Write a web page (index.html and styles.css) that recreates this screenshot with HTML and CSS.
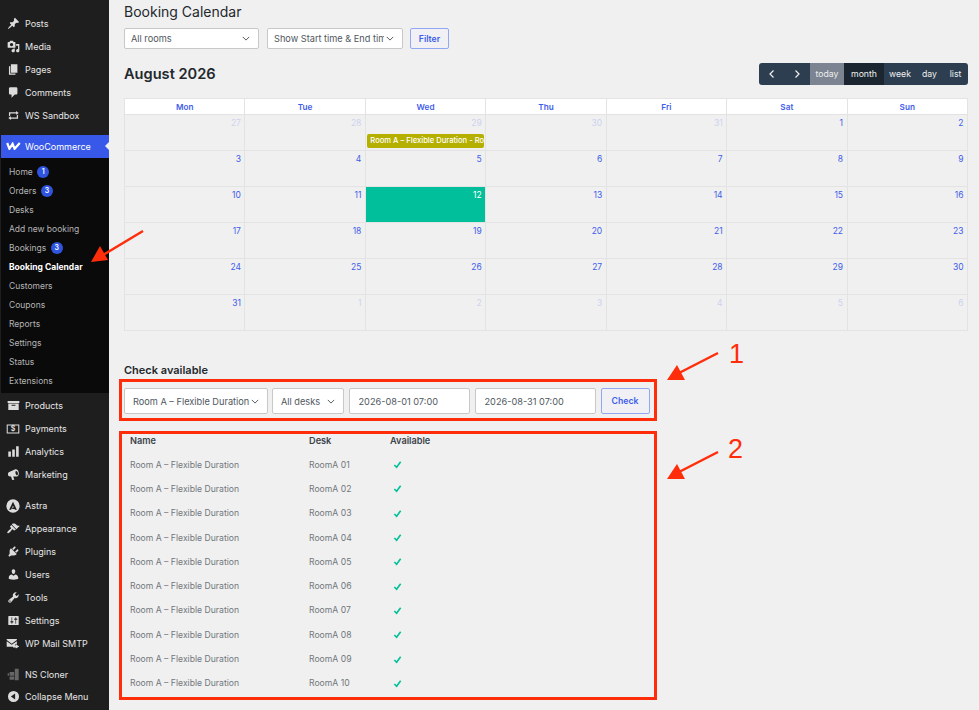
FILE: index.html
```html
<!DOCTYPE html>
<html lang="en">
<head>
    <meta charset="UTF-8">
    <meta name="viewport" content="width=device-width, initial-scale=1.0">
    <title>Booking Calendar</title>
    <link rel="stylesheet" href="styles.css">
</head>
<body>
<div class="page">
    <nav class="sidebar">
        <ul class="menu menu-top">
            <li class="menu-item"><svg class="icon" viewBox="0 0 20 20"><path d="M10.44 3.02l1.82-1.82 6.36 6.35-1.83 1.82c-1.05-.68-2.48-.57-3.41.36l-.75.75c-.92.93-1.04 2.35-.35 3.41l-1.83 1.82-2.41-2.41-2.8 2.79c-.42.42-3.38 2.71-3.8 2.29s1.86-3.39 2.28-3.81l2.79-2.79L4.1 9.36l1.83-1.82c1.05.69 2.48.57 3.4-.36l.75-.75c.93-.92 1.05-2.35.36-3.41z"/></svg>Posts</li>
            <li class="menu-item"><svg class="icon" viewBox="0 0 20 20"><path d="M13 11V4c0-.55-.45-1-1-1h-1.67L9 1H5L3.67 3H2c-.55 0-1 .45-1 1v7c0 .55.45 1 1 1h10c.55 0 1-.45 1-1zM7 4.5c1.38 0 2.5 1.12 2.5 2.5S8.38 9.5 7 9.5 4.5 8.38 4.5 7 5.62 4.5 7 4.5zM14 6h5v10.5c0 1.38-1.12 2.5-2.5 2.5S14 17.88 14 16.5s1.12-2.5 2.5-2.5c.17 0 .34.02.5.05V9h-3V6zm-4 8.05V13h2v3.5c0 1.38-1.12 2.5-2.5 2.5S7 17.88 7 16.5 8.12 14 9.5 14c.17 0 .34.02.5.05z"/></svg>Media</li>
            <li class="menu-item"><svg class="icon" viewBox="0 0 20 20"><path d="M6 15V2h10v13H6zm-1 1h8v2H3V5h2v11z"/></svg>Pages</li>
            <li class="menu-item"><svg class="icon" viewBox="0 0 20 20"><path d="M5 2h9c1.1 0 2 .9 2 2v7c0 1.1-.9 2-2 2h-2l-5 5v-5H5c-1.1 0-2-.9-2-2V4c0-1.1.9-2 2-2z"/></svg>Comments</li>
            <li class="menu-item"><svg class="icon" viewBox="0 0 20 20"><path d="M5 7v3l-2 1.500V5h11V3l4 3.010L14 9V7H5zm10 6v-3l2-1.500V15H6v2l-4-3.010L6 11v2h9z"/></svg>WS Sandbox</li>
        </ul>
        <div class="menu-current">
            <svg class="woo-icon" viewBox="0 0 15 8"><path d="M1.200 1l2.200 5.800L6.600 1.800l2 5L13.800 1"/></svg>
            WooCommerce
        </div>
        <ul class="submenu">
            <li>Home <span class="count">1</span></li>
            <li>Orders <span class="count">3</span></li>
            <li>Desks</li>
            <li>Add new booking</li>
            <li>Bookings <span class="count">3</span></li>
            <li class="current">Booking Calendar</li>
            <li>Customers</li>
            <li>Coupons</li>
            <li>Reports</li>
            <li>Settings</li>
            <li>Status</li>
            <li>Extensions</li>
        </ul>
        <ul class="menu menu-products">
            <li class="menu-item"><svg class="icon" viewBox="0 0 20 20"><path d="M19 3v3H1V3zM2 7h16v10H2zm5 2v1.500h6V9z"/></svg>Products</li>
            <li class="menu-item"><svg class="icon icon-wide" viewBox="0 0 20 20"><path fill-rule="evenodd" d="M1 3.500h18v13H1zM2.500 5v10h15V5z"/><text x="10" y="13.500" text-anchor="middle" class="icon-text">$</text></svg>Payments</li>
            <li class="menu-item"><svg class="icon" viewBox="0 0 20 20"><path d="M18 18V2h-4v16h4zm-6 0V7H8v11h4zm-6 0v-8H2v8h4z"/></svg>Analytics</li>
            <li class="menu-item"><svg class="icon" viewBox="0 0 20 20"><path d="M18 6.500c.6 3-.5 6-2.500 6.400-.2 0-.4.100-.6.100H9.500l1.800 5-3.300.5L6.200 13H4.500C3 13 1.500 11.500 1.500 9.500S2.500 6.700 3.500 6.300L12 2.200C14.500.900 17.300 3 18 6.500zM14 4.500c-1 .3-1.300 2-.8 3.800s1.700 3 2.600 2.700c1-.3 1.300-2 .8-3.800S15 4.200 14 4.500z"/></svg>Marketing</li>
        </ul>
        <ul class="menu menu-group">
            <li class="menu-item"><svg class="icon icon-wide" viewBox="0 0 20 20"><path fill-rule="evenodd" d="M10 .500a9.500 9.500 0 1 1 0 19 9.500 9.500 0 0 1 0-19zM10 4l-5.500 11.500h2.800L10 9.500l1.200 2.600H9.500l-1 2.100h3.700l.6 1.300h2.700z"/></svg>Astra</li>
            <li class="menu-item"><svg class="icon" viewBox="0 0 20 20"><path d="M14.480 11.060L7.410 3.990l1.500-1.500c.5-.56 2.300-.47 3.510.32 1.210.8 1.430 1.280 2.910 2.100 1.180.64 2.450 1.260 4.450.85zm-.71.71L6.700 4.700 4.930 6.470c-.39.39-.39 1.020 0 1.410l1.060 1.060c.39.39.39 1.030 0 1.420-.6.6-1.430 1.110-2.210 1.690-.35.26-.7.53-1.010.84C1.430 13.710 0 16.290.52 16.810l.29.29c.52.52 3.100-.91 4.440-2.250.31-.31.58-.66.84-1.010.58-.78 1.090-1.610 1.690-2.210.39-.39 1.030-.39 1.420 0l1.060 1.060c.39.39 1.020.39 1.410 0z"/></svg>Appearance</li>
            <li class="menu-item"><svg class="icon" viewBox="0 0 20 20"><path d="M13.110 4.360L9.870 7.600 8 5.730l3.240-3.240c.35-.34 1.050-.2 1.560.32.52.51.66 1.210.31 1.550zm-8 1.770l.91-1.120 9.010 9.010-1.190.84c-.71.71-2.630 1.160-3.820 1.160H6.140L4.900 17.260c-.59.59-1.540.59-2.120 0-.59-.58-.59-1.530 0-2.120l1.240-1.240v-3.880c0-1.130.4-3.190 1.090-3.890zm7.260 3.970l3.240-3.240c.34-.35 1.040-.21 1.550.31.52.51.66 1.210.31 1.550l-3.240 3.250z"/></svg>Plugins</li>
            <li class="menu-item"><svg class="icon" viewBox="0 0 20 20"><path d="M10 9.250c-2.270 0-2.730-3.440-2.730-3.440C7 4.020 7.820 2 9.970 2c2.160 0 2.980 2.020 2.710 3.810 0 0-.41 3.440-2.680 3.440zm0 2.570L12.720 10c2.390 0 4.520 2.330 4.520 4.530v2.490s-3.650 1.130-7.240 1.130c-3.650 0-7.240-1.130-7.240-1.130v-2.490c0-2.250 1.940-4.480 4.470-4.480z"/></svg>Users</li>
            <li class="menu-item"><svg class="icon" viewBox="0 0 20 20"><path d="M16.680 9.770c-1.340 1.340-3.300 1.670-4.950.99l-5.410 6.520c-.99.99-2.590.99-3.580 0s-.99-2.590 0-3.570l6.520-5.420c-.68-1.650-.35-3.610.99-4.950 1.280-1.280 3.120-1.620 4.720-1.060l-2.890 2.890 2.820 2.820 2.860-2.870c.53 1.580.18 3.390-1.080 4.650zM3.810 16.210c.4.39 1.040.39 1.430 0 .4-.4.4-1.040 0-1.430-.39-.4-1.030-.4-1.430 0-.39.39-.39 1.030 0 1.430z"/></svg>Tools</li>
            <li class="menu-item"><svg class="icon" viewBox="0 0 20 20"><path d="M18 16V4c0-.55-.45-1-1-1H3c-.55 0-1 .45-1 1v12c0 .55.45 1 1 1h14c.55 0 1-.45 1-1zM8 11h1c.55 0 1 .45 1 1s-.45 1-1 1H8v1.500c0 .28-.22.5-.5.5s-.5-.22-.5-.5V13H6c-.55 0-1-.45-1-1s.45-1 1-1h1V5.500c0-.28.22-.5.5-.5s.5.22.5.5V11zm5-2h-1c-.55 0-1-.45-1-1s.45-1 1-1h1V5.500c0-.28.22-.5.5-.5s.5.22.5.5V7h1c.55 0 1 .45 1 1s-.45 1-1 1h-1v5.500c0 .28-.22.5-.5.5s-.5-.22-.5-.5V9z"/></svg>Settings</li>
            <li class="menu-item"><svg class="icon icon-wide" viewBox="0 0 20 20"><path d="M1 3h14.500v1.200L8.200 9.500 1 4.200zM1 6l7.200 5.200L15.500 6v4.500h-2.500V14H1zM14 12v-1.500l5 3-5 3V15h-4v-3z"/></svg>WP Mail SMTP</li>
        </ul>
        <ul class="menu menu-group">
            <li class="menu-item"><svg class="icon icon-dim" viewBox="0 0 20 20"><path d="M12 1h6v18h-6zM4 6h7v6H4zM1 8h2v4H1zM4 13h7v5H4z"/></svg>NS Cloner</li>
            <li class="menu-item menu-collapse"><svg class="icon" viewBox="0 0 20 20"><path fill-rule="evenodd" d="M10 1.500a8.500 8.500 0 1 1 0 17 8.500 8.500 0 0 1 0-17zM12.500 5.500L6 10l6.500 4.500z"/></svg>Collapse Menu</li>
        </ul>
    </nav>

    <main class="content">
        <h1 class="page-title">Booking Calendar</h1>
        <div class="filters">
            <select class="field field-rooms"><option>All rooms</option></select>
            <select class="field field-time"><option>Show Start time &amp; End time</option></select>
            <button class="btn btn-filter">Filter</button>
        </div>

        <div class="cal-header">
            <h2 class="cal-title">August 2026</h2>
            <div class="toolbar">
                <span class="tool tool-nav"><svg viewBox="0 0 10 10"><path d="M6.500 1.500L3 5l3.500 3.500"/></svg></span>
                <span class="tool tool-nav"><svg viewBox="0 0 10 10"><path d="M3.500 1.500L7 5 3.500 8.500"/></svg></span>
                <span class="tool tool-today">today</span>
                <span class="tool tool-active">month</span>
                <span class="tool tool-week">week</span>
                <span class="tool tool-day">day</span>
                <span class="tool tool-list">list</span>
            </div>
        </div>

        <table class="calendar">
            <thead>
                <tr><th>Mon</th><th>Tue</th><th>Wed</th><th>Thu</th><th>Fri</th><th>Sat</th><th>Sun</th></tr>
            </thead>
            <tbody>
                <tr>
                    <td class="other">27</td><td class="other">28</td>
                    <td class="other">29<div class="event">Room A – Flexible Duration - Room A 01</div></td>
                    <td class="other">30</td><td class="other">31</td><td>1</td><td>2</td>
                </tr>
                <tr><td>3</td><td>4</td><td>5</td><td>6</td><td>7</td><td>8</td><td>9</td></tr>
                <tr><td>10</td><td>11</td><td class="today">12</td><td>13</td><td>14</td><td>15</td><td>16</td></tr>
                <tr><td>17</td><td>18</td><td>19</td><td>20</td><td>21</td><td>22</td><td>23</td></tr>
                <tr><td>24</td><td>25</td><td>26</td><td>27</td><td>28</td><td>29</td><td>30</td></tr>
                <tr>
                    <td>31</td><td class="other">1</td><td class="other">2</td><td class="other">3</td>
                    <td class="other">4</td><td class="other">5</td><td class="other">6</td>
                </tr>
            </tbody>
        </table>

        <h3 class="check-title">Check available</h3>
        <div class="red-box check-form">
            <select class="field field-room"><option>Room A – Flexible Duration</option></select>
            <select class="field field-desk"><option>All desks</option></select>
            <input class="field field-date" type="text" value="2026-08-01 07:00">
            <input class="field field-date field-date-end" type="text" value="2026-08-31 07:00">
            <button class="btn btn-check">Check</button>
        </div>

        <div class="red-box results">
            <div class="result-row result-head"><span>Name</span><span>Desk</span><span>Available</span></div>
            <div class="result-row"><span>Room A – Flexible Duration</span><span>RoomA 01</span><svg class="check" viewBox="0 0 10 10"><path d="M1.500 5.500L4 8l4.500-6"/></svg></div>
            <div class="result-row"><span>Room A – Flexible Duration</span><span>RoomA 02</span><svg class="check" viewBox="0 0 10 10"><path d="M1.500 5.500L4 8l4.500-6"/></svg></div>
            <div class="result-row"><span>Room A – Flexible Duration</span><span>RoomA 03</span><svg class="check" viewBox="0 0 10 10"><path d="M1.500 5.500L4 8l4.500-6"/></svg></div>
            <div class="result-row"><span>Room A – Flexible Duration</span><span>RoomA 04</span><svg class="check" viewBox="0 0 10 10"><path d="M1.500 5.500L4 8l4.500-6"/></svg></div>
            <div class="result-row"><span>Room A – Flexible Duration</span><span>RoomA 05</span><svg class="check" viewBox="0 0 10 10"><path d="M1.500 5.500L4 8l4.500-6"/></svg></div>
            <div class="result-row"><span>Room A – Flexible Duration</span><span>RoomA 06</span><svg class="check" viewBox="0 0 10 10"><path d="M1.500 5.500L4 8l4.500-6"/></svg></div>
            <div class="result-row"><span>Room A – Flexible Duration</span><span>RoomA 07</span><svg class="check" viewBox="0 0 10 10"><path d="M1.500 5.500L4 8l4.500-6"/></svg></div>
            <div class="result-row"><span>Room A – Flexible Duration</span><span>RoomA 08</span><svg class="check" viewBox="0 0 10 10"><path d="M1.500 5.500L4 8l4.500-6"/></svg></div>
            <div class="result-row"><span>Room A – Flexible Duration</span><span>RoomA 09</span><svg class="check" viewBox="0 0 10 10"><path d="M1.500 5.500L4 8l4.500-6"/></svg></div>
            <div class="result-row"><span>Room A – Flexible Duration</span><span>RoomA 10</span><svg class="check" viewBox="0 0 10 10"><path d="M1.500 5.500L4 8l4.500-6"/></svg></div>
        </div>
    </main>

    <!-- red annotations drawn over the screenshot -->
    <svg class="notes" viewBox="0 0 979 710">
        <path class="note-line" d="M143 231L103 255"/>
        <path class="note-head" d="M91 262L100 246L108 260z"/>
        <path class="note-line" d="M718 353L679 373"/>
        <path class="note-head" d="M667 380L677 365L685 380z"/>
        <path class="note-line" d="M718 452L679 472"/>
        <path class="note-head" d="M667 479L677 464L685 479z"/>
        <text class="note-num" x="729" y="363">1</text>
        <text class="note-num" x="728" y="458">2</text>
    </svg>
</div>
</body>
</html>
```

FILE: styles.css
```css
* {
    box-sizing: border-box;
}
html, body {
    margin: 0;
    height: 100%;
}
body {
    font-family: Inter, "Liberation Sans", Arial, sans-serif;
    background-color: #f0f0f0;
    color: #2c3338;
    overflow: hidden;
}
.page {
    position: relative;
    display: flex;
    width: 979px;
    height: 710px;
    overflow: hidden;
}
ul {
    list-style: none;
    margin: 0;
    padding: 0;
}

/* sidebar */
.sidebar {
    flex: 0 0 109px;
    height: 710px;
    padding: 11.500px 0 0 1px;
    background-color: #1e1e1e;
    color: #e6e6e6;
    font-size: 9px;
}
.menu-item {
    display: flex;
    align-items: center;
    height: 23px;
    padding-left: 6px;
}
.icon {
    flex: none;
    width: 13px;
    height: 13px;
    margin-right: 5px;
    fill: #dcdcdc;
}
.icon-wide {
    width: 14px;
    height: 14px;
    margin-left: -1px;
    margin-right: 5px;
}
.icon-dim {
    fill: #666;
}
.icon-text {
    font-size: 10px;
    font-weight: 700;
}
.menu-current {
    display: flex;
    align-items: center;
    position: relative;
    height: 23px;
    margin-top: 8px;
    padding-left: 5px;
    background-color: #3858e9;
    color: #fff;
}
.menu-current::after {
    content: "";
    position: absolute;
    right: 0;
    top: 7px;
    border: 4.500px solid transparent;
    border-right-color: #f0f0f0;
    border-left-width: 0;
}
.woo-icon {
    flex: none;
    width: 15px;
    height: 8px;
    margin-right: 4px;
    fill: none;
    stroke: #fff;
    stroke-width: 2.200;
}
.submenu {
    padding: 4.500px 0 3px 8px;
    background-color: #0a0a0a;
    color: #b4b4b4;
    font-size: 8.500px;
}
.submenu li {
    display: flex;
    align-items: center;
    gap: 4.500px;
    height: 19px;
}
.submenu .current {
    color: #fff;
    font-weight: 700;
}
.count {
    display: inline-block;
    width: 12px;
    height: 12px;
    border-radius: 50%;
    background-color: #2f55e0;
    color: #fff;
    font-size: 7px;
    font-weight: 600;
    line-height: 12px;
    text-align: center;
}
.menu-products {
    padding-top: 1px;
}
.menu-group {
    margin-top: 8px;
}
.menu-collapse {
    height: 22px;
    margin-top: -1px;
}

/* main column */
.content {
    flex: 1;
    padding: 0 11px 0 15px;
}
.page-title {
    margin: 0;
    height: 28px;
    padding-top: 2px;
    font-size: 14px;
    font-weight: 400;
    line-height: 20px;
    color: #23282d;
}
.filters {
    display: flex;
    gap: 8px;
}
.field {
    height: 21px;
    border: 1px solid #c8c8c8;
    border-radius: 2px;
    background-color: #fff;
    color: #50575e;
    font-family: inherit;
    font-size: 9.200px;
}
select.field {
    appearance: none;
    padding: 0 18px 0 6px;
    background-image: url("data:image/svg+xml,%3Csvg xmlns='http://www.w3.org/2000/svg' viewBox='0 0 10 6'%3E%3Cpath d='M1 1l4 4 4-4' fill='none' stroke='%2350575e' stroke-width='1.200'/%3E%3C/svg%3E");
    background-repeat: no-repeat;
    background-position: right 8px center;
    background-size: 8px 5px;
}
.field-rooms {
    width: 135px;
}
.field-time {
    width: 136px;
}
.btn {
    border: 1px solid #93a8f4;
    border-radius: 2px;
    background-color: #f0f0f5;
    color: #3f5eea;
    font-family: inherit;
    font-weight: 600;
    font-size: 8.700px;
    padding: 0;
}
.btn-filter {
    width: 39px;
    height: 21px;
    margin-left: -1px;
}

.cal-header {
    display: flex;
    justify-content: space-between;
    align-items: center;
    height: 22px;
    margin-top: 14px;
    margin-bottom: 13px;
}
.cal-title {
    margin: 0;
    font-size: 14.600px;
    font-weight: 600;
    color: #23282d;
}
.toolbar {
    display: flex;
    align-items: stretch;
    width: 209px;
    height: 22px;
    border-radius: 3px;
    overflow: hidden;
    background-color: #2c3e50;
    color: #f0f0f0;
    font-size: 8.700px;
}
.tool {
    display: flex;
    align-items: center;
    justify-content: center;
}
.tool-nav {
    flex: 0 0 25.500px;
}
.tool-nav svg {
    width: 10px;
    height: 10px;
    fill: none;
    stroke: #f0f0f0;
    stroke-width: 1.200;
}
.tool-today {
    flex: 0 0 34px;
    background-color: #7b8490;
}
.tool-active {
    flex: 0 0 40px;
    background-color: #1b2631;
}
.tool-week {
    flex: 0 0 32px;
}
.tool-day {
    flex: 0 0 27px;
}
.tool-list {
    flex: 1;
}

.calendar {
    width: 844px;
    border-collapse: collapse;
    table-layout: fixed;
}
.calendar th {
    height: 16px;
    padding: 0;
    border: 1px solid #e3e3e3;
    background-color: #fff;
    color: #3f5eea;
    font-size: 8.200px;
    font-weight: 600;
}
.calendar td {
    height: 36px;
    padding: 3px 3.500px 0;
    border: 1px solid #e3e3e3;
    color: #3f5eea;
    font-size: 8.500px;
    line-height: 11px;
    text-align: right;
    vertical-align: top;
}
.calendar .other {
    color: #cdd3ee;
}
.calendar .today {
    background-color: #00bf9a;
    color: #fff;
}
.event {
    height: 14px;
    margin: 5px -2px 0;
    padding: 0 3px;
    border-radius: 2px;
    overflow: hidden;
    background-color: #b5b000;
    color: #fff;
    font-size: 7.600px;
    font-weight: 500;
    line-height: 14px;
    text-align: left;
    white-space: nowrap;
}

.check-title {
    margin: 32px 0 0;
    height: 16px;
    font-size: 11px;
    font-weight: 600;
    line-height: 14px;
    color: #23282d;
}
.red-box {
    width: 538px;
    margin-left: -5px;
    border: 3px solid #ff2d0a;
}
.check-form {
    display: flex;
    gap: 4.500px;
    height: 42px;
    padding: 6px 2px;
}
.check-form .field {
    height: 26px;
}
select.field-room {
    width: 144px;
    margin-right: -.5px;
    padding-left: 8px;
    padding-right: 16px;
}
select.field-desk {
    width: 72px;
    padding-left: 8px;
}
input.field-date {
    width: 121px;
    padding: 0 9px;
}
input.field-date-end {
    width: 121.500px;
    margin-left: .5px;
}
.btn-check {
    width: 49px;
    height: 26px;
}

.results {
    height: 269px;
    margin-top: 10px;
    padding: 0 8px;
    font-size: 8.650px;
    color: #72777c;
}
.result-row {
    display: grid;
    grid-template-columns: 179px 81px 1fr;
    align-items: center;
    height: 24.300px;
}
.result-head {
    height: 18.500px;
    padding-bottom: 6.500px;
    color: #3c434a;
    font-size: 9.200px;
    font-weight: 600;
}
.check {
    width: 9px;
    height: 9px;
    margin-left: 3px;
    fill: none;
    stroke: #00c09a;
    stroke-width: 1.800;
}

/* annotations */
.notes {
    position: absolute;
    left: 0;
    top: 0;
    width: 979px;
    height: 710px;
    pointer-events: none;
}
.note-line {
    fill: none;
    stroke: #ff2d0a;
    stroke-width: 2.500;
}
.note-head {
    fill: #ff2d0a;
}
.note-num {
    fill: #ff2d0a;
    font-family: "Liberation Sans", Arial, sans-serif;
    font-size: 27px;
}
```
